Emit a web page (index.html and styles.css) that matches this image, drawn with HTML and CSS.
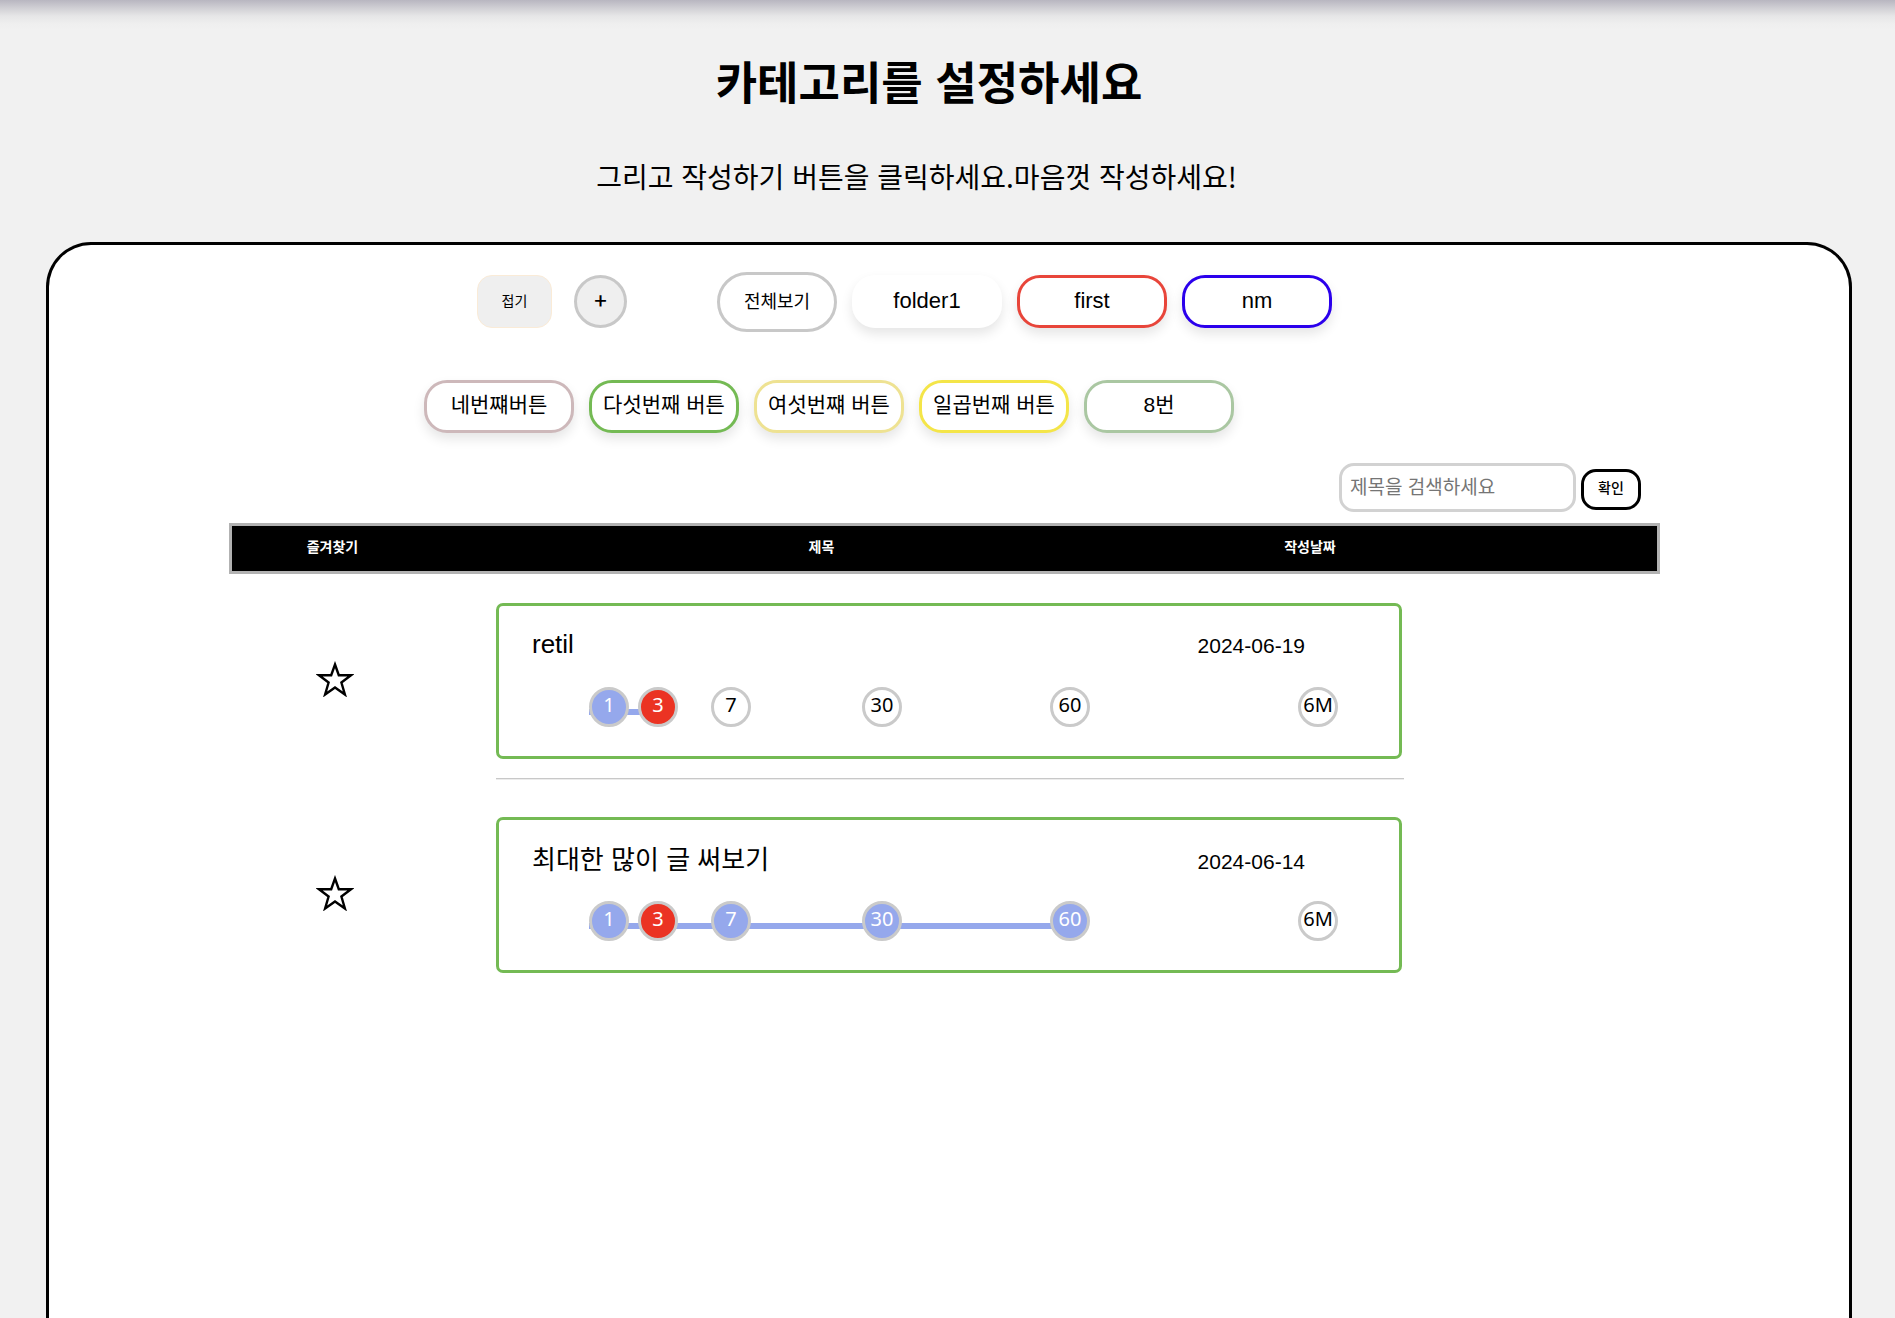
FILE: index.html
```html
<!DOCTYPE html>
<html lang="ko">
<head>
  <meta charset="utf-8">
  <meta name="viewport" content="width=device-width, initial-scale=1">
  <title>카테고리 설정</title>
  <link rel="stylesheet" href="styles.css">
</head>
<body>
  <header class="intro">
    <h1 class="intro-title">카테고리를 설정하세요</h1>
    <p class="intro-text">그리고 작성하기 버튼을 클릭하세요.마음껏 작성하세요!</p>
  </header>

  <main class="panel">
    <nav class="folders" aria-label="카테고리">
      <div class="folder-row folder-row-first">
        <button type="button" class="fold">접기</button>
        <button type="button" class="add" aria-label="카테고리 추가">+</button>
        <button type="button" class="all">전체보기</button>
        <button type="button" class="folder folder-white" lang="en">folder1</button>
        <button type="button" class="folder folder-red" lang="en">first</button>
        <button type="button" class="folder folder-blue" lang="en">nm</button>
      </div>
      <div class="folder-row">
        <button type="button" class="folder folder-rose">네번쨰버튼</button>
        <button type="button" class="folder folder-green">다섯번째 버튼</button>
        <button type="button" class="folder folder-khaki">여섯번쨰 버튼</button>
        <button type="button" class="folder folder-yellow">일곱번째 버튼</button>
        <button type="button" class="folder folder-sage">8번</button>
      </div>
    </nav>

    <section class="board">
      <form class="search">
        <input class="search-input" type="text" placeholder="제목을 검색하세요" aria-label="제목 검색">
        <button type="button" class="search-button">확인</button>
      </form>

      <table class="posts">
        <colgroup>
          <col class="col-star">
          <col class="col-title">
          <col class="col-date">
        </colgroup>
        <thead>
          <tr>
            <th scope="col">즐겨찾기</th>
            <th scope="col">제목</th>
            <th scope="col">작성날짜</th>
          </tr>
        </thead>
        <tbody>
          <tr class="post">
            <td class="star-cell">
              <button type="button" class="star" aria-label="즐겨찾기">
                <svg viewBox="0 0 38 36" width="38" height="36"><path d="M19 3.5 22.8 14.2H35L25.4 21.5 28.9 33.5 19 26.4 9.1 33.5 12.6 21.5 3 14.2H15.2Z"/></svg>
              </button>
            </td>
            <td class="card-cell" colspan="2">
              <article class="card">
                <div class="card-head">
                  <h2 class="card-title" lang="en">retil</h2>
                  <time class="card-date" datetime="2024-06-19">2024-06-19</time>
                </div>
                <div class="track">
                  <span class="track-fill" style="width: 10%"></span>
                  <ol class="steps">
                    <li class="step step-done">1</li>
                    <li class="step step-due">3</li>
                    <li class="step">7</li>
                    <li class="step">30</li>
                    <li class="step">60</li>
                    <li class="step">6M</li>
                  </ol>
                </div>
              </article>
              <hr class="divider">
            </td>
          </tr>
          <tr class="post">
            <td class="star-cell">
              <button type="button" class="star" aria-label="즐겨찾기">
                <svg viewBox="0 0 38 36" width="38" height="36"><path d="M19 3.5 22.8 14.2H35L25.4 21.5 28.9 33.5 19 26.4 9.1 33.5 12.6 21.5 3 14.2H15.2Z"/></svg>
              </button>
            </td>
            <td class="card-cell" colspan="2">
              <article class="card">
                <div class="card-head">
                  <h2 class="card-title">최대한 많이 글 써보기</h2>
                  <time class="card-date" datetime="2024-06-14">2024-06-14</time>
                </div>
                <div class="track">
                  <span class="track-fill" style="width: 64%"></span>
                  <ol class="steps">
                    <li class="step step-done">1</li>
                    <li class="step step-due">3</li>
                    <li class="step step-done">7</li>
                    <li class="step step-done">30</li>
                    <li class="step step-done">60</li>
                    <li class="step">6M</li>
                  </ol>
                </div>
              </article>
            </td>
          </tr>
        </tbody>
      </table>
    </section>
  </main>
</body>
</html>
```
FILE: styles.css
```css
* {
  box-sizing: border-box;
}

body {
  display: flex;
  flex-direction: column;
  min-height: 100vh;
  margin: 0;
  background: #f1f1f1;
  color: #000;
  font-family: "Liberation Sans", "Noto Sans CJK KR", sans-serif;
}

button,
input {
  margin: 0;
  padding: 0;
  color: #000;
  font-family: inherit;
}

/* Intro */
.intro {
  height: 242px;
  padding-top: 51px;
  background: linear-gradient(#b8b6c0, #d0cfd4 8px, #e6e6e7 16px, #efefef 24px, #f1f1f1 30px);
  text-align: center;
}

.intro-title,
.intro-text {
  margin: 0;
  font-family: "Noto Sans CJK KR", sans-serif;
}

.intro-title {
  padding-right: 37px;
  font-size: 45px;
  line-height: 60px;
}

.intro-text {
  margin-top: 35px;
  padding-right: 62px;
  font-size: 28px;
  line-height: 60px;
}

/* Panel */
.panel {
  flex: 1;
  margin: 0 43px 0 46px;
  padding-top: 27px;
  border: 3px solid #000;
  border-bottom: 0;
  border-radius: 45px 45px 0 0;
  background: #fff;
}

/* Category buttons */
.folders {
  width: fit-content;
  margin: 0 auto;
  padding-right: 142px;
}

.folder-row {
  display: flex;
  align-items: center;
  gap: 15px;
}

.folder-row-first {
  height: 59px;
  margin: 0 0 49px 53px;
}

.fold {
  width: 75px;
  height: 53px;
  margin-right: 7px;
  padding-bottom: 4px;
  border: 1px solid #faebd7;
  border-radius: 15px;
  background: #efefef;
  font-size: 14px;
}

.add {
  width: 53px;
  height: 53px;
  margin-right: 75px;
  padding-bottom: 6px;
  border: 3px solid #c8c8c8;
  border-radius: 50%;
  background: #efefef;
  font-family: "Noto Sans CJK KR", sans-serif;
  font-size: 22px;
  font-weight: 500;
}

.all {
  width: 120px;
  height: 60px;
  padding-bottom: 4px;
  border: 3px solid #c8c8c8;
  border-radius: 30px;
  background: #fff;
  font-size: 18px;
}

.folder {
  width: 150px;
  height: 53px;
  padding-bottom: 8px;
  border: 3px solid;
  border-radius: 23px;
  background: #fff;
  box-shadow: 0 6px 12px rgba(0, 0, 0, 0.1);
  font-size: 21px;
  white-space: nowrap;
}

.folder:lang(en) {
  padding-bottom: 2px;
  font-size: 22px;
}

.folder-white { border-color: #fff; }
.folder-red { border-color: #e8453a; }
.folder-blue { border-color: #2b00ec; }
.folder-rose { border-color: #cdb8ba; }
.folder-green { border-color: #74ba54; }
.folder-khaki { border-color: #eee292; }
.folder-yellow { border-color: #f4e548; }
.folder-sage { border-color: #aac7a2; }

/* Board */
.board {
  padding: 30px 189px 40px 180px;
}

.search {
  display: flex;
  justify-content: flex-end;
  align-items: center;
  gap: 5px;
  margin: 0 19px 11px 0;
}

.search-input {
  width: 237px;
  height: 49px;
  padding: 0 8px;
  border: 3px solid #d2d2d2;
  border-radius: 15px;
  background: #fff;
  font-size: 19px;
}

.search-input::placeholder {
  color: #757575;
}

.search-button {
  width: 60px;
  height: 41px;
  margin-top: 3px;
  padding-bottom: 4px;
  border: 3px solid #000;
  border-radius: 15px;
  background: #fff;
  font-family: "Noto Sans CJK KR", sans-serif;
  font-size: 14px;
  font-weight: 500;
}

/* Posts */
.posts {
  width: 100%;
  table-layout: fixed;
  border-spacing: 0;
}

.col-star { width: 208px; }
.col-date { width: 454px; }

.posts th {
  height: 51px;
  padding: 0 0 6px;
  border: solid #b2b2b2;
  border-width: 3px 0;
  background: #000;
  color: #fff;
  font-size: 14px;
}

.posts th:first-child {
  padding-right: 4px;
  border-left-width: 3px;
}

.posts th:last-child {
  padding-right: 243px;
  border-right-width: 3px;
}

.star-cell {
  height: 214px;
  padding: 0 0 0 4px;
  text-align: center;
  vertical-align: top;
}

.star {
  margin-top: 87px;
  border: 0;
  background: none;
}

.star svg {
  display: block;
  fill: none;
  stroke: #000;
  stroke-width: 2.4;
}

.card-cell {
  padding: 29px 256px 0 59px;
  vertical-align: top;
}

.card {
  height: 156px;
  margin-right: 2px;
  padding: 18px 61px 0 33px;
  border: 3px solid #74ba54;
  border-radius: 7px;
}

.card-head {
  display: flex;
  align-items: baseline;
  justify-content: space-between;
  height: 40px;
  padding-right: 33px;
  line-height: 40px;
}

.card-title {
  margin: 0;
  font-family: "Noto Sans CJK KR", sans-serif;
  font-size: 26px;
  font-weight: 400;
}

.card-title:lang(en) {
  font-family: "Liberation Sans", sans-serif;
}

.card-date {
  font-size: 21px;
}

.track {
  position: relative;
  margin: 23px 0 0 57px;
}

.track-fill {
  position: absolute;
  top: 22px;
  left: 0;
  height: 6px;
  background: #95a8ec;
}

.steps {
  position: relative;
  display: grid;
  grid-template-columns: 49fr 73fr 151fr 188fr 248fr 40px;
  margin: 0;
  padding: 0;
  list-style: none;
}

.step {
  width: 40px;
  height: 40px;
  border: 3px solid #cacaca;
  border-radius: 50%;
  background: #fff;
  font-family: "Noto Sans", sans-serif;
  font-size: 20px;
  line-height: 30px;
  text-align: center;
}

.step-done,
.step-due {
  color: #fff;
}

.step-done { background: #95a8ec; }
.step-due { background: #eb3323; }

.divider {
  margin: 19px 0 0;
  border: solid;
  border-width: 1px 0;
  border-color: #c8c8c8 #000 #ececec;
}
```
